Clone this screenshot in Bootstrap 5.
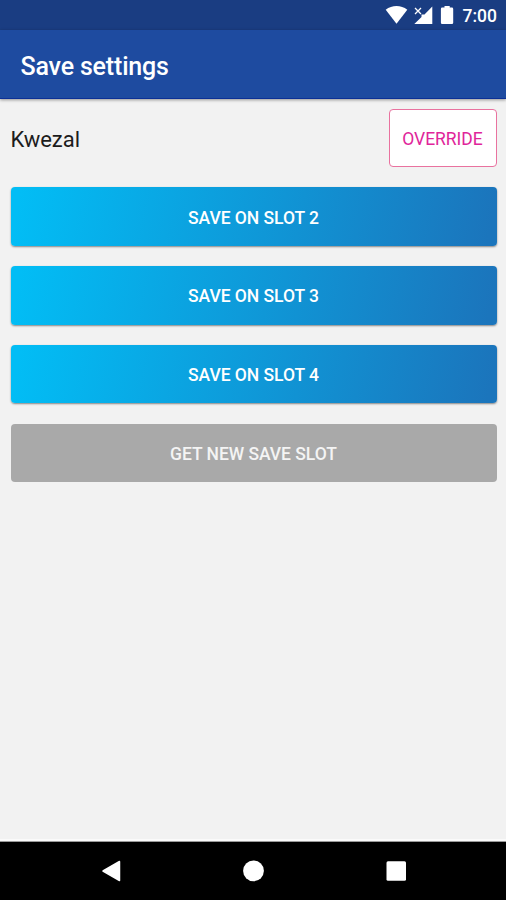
<!DOCTYPE html>
<html lang="en">
<head>
<meta charset="utf-8">
<meta name="viewport" content="width=device-width, initial-scale=1">
<title>Save settings</title>
<link href="https://cdn.jsdelivr.net/npm/bootstrap@5.3.0/dist/css/bootstrap.min.css" rel="stylesheet">
<style>
body{font-family:Roboto,"Liberation Sans",sans-serif;background:#f2f2f2;color:#1c1c1c}
svg{display:block}
.status-strip{height:30px;background:#1a3d82;color:#fff;font-size:17.5px;font-weight:500;padding-right:9px}
.status-strip span{line-height:30px;padding-top:2px;margin-left:7px}
.app-bar{height:69px;background:#1e4ba0;border-bottom:1px solid #0c3096;padding:4px 20.5px 0;box-shadow:0 1px 3px rgba(0,0,0,.4)}
.app-title{font-size:25px;letter-spacing:-.17px;font-weight:500;color:#fff;line-height:1}
.content{padding:9.5px 9.5px 0 10.5px}
.slot-row{height:58.5px;margin-bottom:20.25px}
.slot-name{font-size:22px;padding-top:3px}
.btn-slot,.btn-override{border-radius:4px;font-size:17.5px;letter-spacing:-.04px;line-height:1;padding:3.5px 0 0}
.btn-slot{height:58.5px;margin-bottom:20.25px;color:#fff;font-weight:500;border:0}
.btn-save{background:linear-gradient(100deg,#02bdf5 2%,#1b75bc 98%);box-shadow:0 1px 2px rgba(0,0,0,.45)}
.btn-new{background:#a9a9a9;color:#f4f4f4}
.btn-override{width:108px;height:58.5px;background:#fff;border:1px solid #e9729f;color:#e0259a}
.system-nav{height:58px;background:#000;padding:0 99px 0 101px;box-shadow:0 -1px 0 #9b9b9b,0 -3px 0 #fafafa}
</style>
<script src="https://cdn.jsdelivr.net/npm/bootstrap@5.3.0/dist/js/bootstrap.bundle.min.js"></script>
</head>
<body class="d-flex flex-column vh-100 overflow-hidden">
<div class="status-strip d-flex align-items-center justify-content-end flex-shrink-0">
  <svg width="71" height="30" viewBox="0 0 71 30" fill="#fff" aria-hidden="true">
    <path d="M0.700 9.800C7 4.800 16 4.800 22.300 9.800L11.500 23.700Z"/>
    <path d="M47.300 6.500V24H29.300L36.500 17V14.500H39.500Z"/>
    <path d="M30 8l6 6m0-6l-6 6" stroke="#fff" stroke-width="1.300"/>
    <path d="M59.500 6h5.200v1.600h2.200a1.300 1.300 0 0 1 1.300 1.300v13.800a1.300 1.300 0 0 1-1.300 1.300h-9.700a1.300 1.300 0 0 1-1.300-1.300V8.900a1.300 1.300 0 0 1 1.300-1.300h2.300z"/>
  </svg>
  <span>7:00</span>
</div>
<header class="app-bar d-flex align-items-center flex-shrink-0">
  <h1 class="app-title mb-0">Save settings</h1>
</header>
<main class="content flex-grow-1">
  <div class="slot-row d-flex align-items-center justify-content-between">
    <span class="slot-name">Kwezal</span>
    <button type="button" class="btn btn-override">OVERRIDE</button>
  </div>
  <button type="button" class="btn btn-slot btn-save d-block w-100">SAVE ON SLOT 2</button>
  <button type="button" class="btn btn-slot btn-save d-block w-100">SAVE ON SLOT 3</button>
  <button type="button" class="btn btn-slot btn-save d-block w-100">SAVE ON SLOT 4</button>
  <button type="button" class="btn btn-slot btn-new d-block w-100">GET NEW SAVE SLOT</button>
</main>
<nav class="system-nav d-flex align-items-center justify-content-between flex-shrink-0">
  <svg width="20" height="22" viewBox="0 0 20 22" aria-hidden="true"><path d="M2 11 18.500 1.500V20.500Z" fill="#fff" stroke="#fff" stroke-width="1.500" stroke-linejoin="round"/></svg>
  <svg width="22" height="22" viewBox="0 0 22 22" aria-hidden="true"><circle cx="10.500" cy="10.800" r="10.400" fill="#fff"/></svg>
  <svg width="21" height="20" viewBox="0 0 21 20" aria-hidden="true"><rect x=".5" y=".2" width="19.500" height="19.500" rx="1.500" fill="#fff"/></svg>
</nav>
</body>
</html>
